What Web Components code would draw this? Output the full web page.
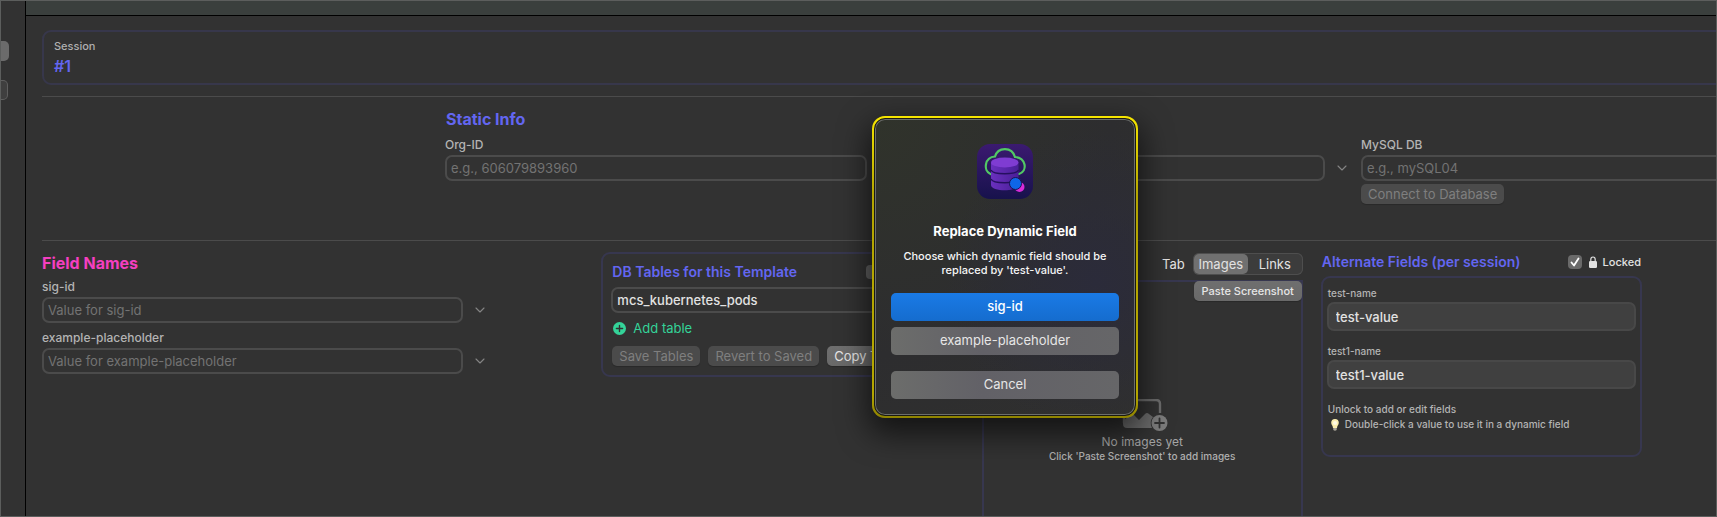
<!DOCTYPE html>
<html lang="en">
<head>
<meta charset="utf-8">
<title>Session #1</title>
<style>
  html, body { margin: 0; min-height: 100%; background: #323232; }
  body { font-family: Inter, "Liberation Sans", sans-serif; font-size: 13px; color: #e2e2e2; }
</style>
</head>
<body>
<app-window>
  <side-strip slot="side"></side-strip>
  <session-card name="#1"></session-card>
  <static-info></static-info>
  <work-area></work-area>
  <replace-dialog slot="dialog" heading="Replace Dynamic Field">Choose which dynamic field should be replaced by 'test-value'.</replace-dialog>
</app-window>

<script>
const define = (tag, html, setup) => {
  customElements.define(tag, class extends HTMLElement {
    constructor() {
      super();
      const t = document.createElement('template');
      t.innerHTML = '<style>*,:host{box-sizing:border-box}button,input{font:inherit;color:inherit;margin:0}' +
        'h2,h3,p{margin:0}</style>' + html;
      this.attachShadow({ mode: 'open' }).append(t.content.cloneNode(true));
      if (setup) setup(this, this.shadowRoot);
    }
  });
};

define('app-window', `
<style>
  :host { display: grid; grid-template-columns: auto minmax(0, 1fr); position: relative;
    height: 100vh; border: 1px solid #5c5e5d; overflow: hidden; background: #323232; }
  .main { display: flex; flex-direction: column; overflow: hidden; }
  .toolbar { flex: none; height: 15px; background: #3a3f3d; border-bottom: 1px solid #000; }
  .content { flex: 1; display: flex; flex-direction: column; padding: 14px 0 0 16px; min-height: 0; overflow: hidden; }
</style>
<slot name="side"></slot>
<div class="main"><div class="toolbar"></div><main class="content"><slot></slot></main></div>
<slot name="dialog"></slot>`);

define('side-strip', `
<style>
  :host { display: flex; flex-direction: column; gap: 19px; width: 25px; padding-top: 40px; border-right: 1px solid #000; }
  div { height: 20px; width: 8px; border-radius: 0 5px 5px 0; background: #6b6b6b; }
  .low { width: 7px; background: #3f3f3f; border: 1px solid #5f5f5f; border-left: 0; }
</style>
<div></div><div class="low"></div>`);

define('session-card', `
<style>
  :host { display: block; flex: none; height: 55px; margin-right: -16px; padding: 7px 10px; border: 2px solid #37374b; border-radius: 9px; }
  p { font-size: 11px; line-height: 14px; color: #b0b0b0; font-weight: 500; }
  h2 { margin-top: 2px; font-size: 16px; line-height: 22px; font-weight: 600; color: #6366f1; }
</style>
<p>Session</p><h2></h2>`, (el, root) => { root.querySelector('h2').textContent = el.getAttribute('name'); });

define('push-button', `
<style>
  :host { display: inline-flex; --pad: 7px; }
  button { flex: 1; height: 20px; padding: 0 var(--pad); border: 0; border-radius: 5px; background: linear-gradient(#6f6f6f, #696969);
    line-height: 20px; white-space: nowrap; color: #e6e6e6; box-shadow: 0 1px 1px #0003; }
  button:disabled { background: #4b4b4b; color: #7f7f7f; }
</style>
<button type="button"><slot></slot></button>`, (el, root) => {
  root.querySelector('button').disabled = el.hasAttribute('disabled');
});

/* Labelled text box; "menu" adds the history chevron after it */
define('text-field', `
<style>
  :host { display: block; }
  label { display: block; line-height: 16px; font-size: 12px; font-weight: 500; color: #b4b4b4; margin-bottom: 2px; }
  :host([bare]) label { display: none; }
  :host([bare]) input { font-weight: 500; }
  .row { display: flex; align-items: center; gap: 12px; }
  input { flex: 1; min-width: 0; height: 26px; padding: 0 4px; border: 2px solid #4b4b4b; border-radius: 7px; background: transparent; color: #e2e2e2; outline: 0; }
  input::placeholder { color: #737373; opacity: 1; }
  svg { flex: none; width: 10px; height: 6px; margin-right: 14px; }
  :host(:not([menu])) svg { display: none; }
  :host([filled]) label { font-size: 10px; line-height: 14px; padding-left: 1px; }
  :host([filled]) input { height: 29px; padding: 0 7px; background: #404040; border-color: #484848; font-weight: 500; }
</style>
<label for="box"></label>
<div class="row"><input id="box" type="text">
<svg viewBox="0 0 10 6" fill="none" stroke="#858585" stroke-width="1.1" stroke-linecap="round" stroke-linejoin="round"><path d="M1 1l4 4 4-4"/></svg></div>`, (el, root) => {
  const i = root.querySelector('input');
  root.querySelector('label').textContent = el.getAttribute('label') || '';
  i.placeholder = el.getAttribute('placeholder') || '';
  i.value = el.getAttribute('value') || '';
});

define('static-info', `
<style>
  :host { display: grid; flex: none; grid-template-columns: 403fr 458fr 458fr 355fr; height: 145px; margin-top: 11px; padding-top: 11px;
    border-top: 1px solid #4b4b4b; border-bottom: 1px solid #4b4b4b; align-content: start; }
  h2 { grid-column: 2 / -1; font-size: 16px; line-height: 22px; font-weight: 700; color: #6366f1; padding-left: 1px; }
  text-field { margin-top: 7px; }
  .first { grid-column: 2; }
  .last { margin-right: -30px; }
  push-button { grid-column: 4; justify-self: start; margin-top: 3px; }
</style>
<h2>Static Info</h2>
<text-field class="first" menu label="Org-ID" placeholder="e.g., 606079893960"></text-field>
<text-field menu label="Acct-ID"></text-field>
<text-field class="last" label="MySQL DB" placeholder="e.g., mySQL04"></text-field>
<push-button disabled>Connect to Database</push-button>`);

define('work-area', `
<style>
  :host { flex: 1; display: grid; grid-template-columns: 541fr 362fr 321fr 321fr; gap: 18px; padding: 11px 74px 0 0; min-height: 0; align-items: start; }
  image-tray { align-self: stretch; }
</style>
<field-names></field-names><db-tables></db-tables><image-tray></image-tray><alternate-fields></alternate-fields>`);

define('field-names', `
<style>
  :host { display: block; padding-right: 84px; }
  h2 { font-size: 16px; line-height: 22px; font-weight: 700; color: #f43fc0; margin-bottom: 5px; }
  .stack { display: flex; flex-direction: column; gap: 7px; }
</style>
<h2>Field Names</h2>
<div class="stack">
<text-field menu label="sig-id" placeholder="Value for sig-id"></text-field>
<text-field menu label="example-placeholder" placeholder="Value for example-placeholder"></text-field>
</div>`);

define('db-tables', `
<style>
  :host { display: block; height: 125px; padding: 8px; border: 2px solid #37374f; border-radius: 9px; }
  .head { display: flex; justify-content: space-between; align-items: center; height: 20px; padding-left: 1px; margin-bottom: 5px; }
  h3 { font-size: 14px; line-height: 20px; font-weight: 600; color: #6366f1; }
  .head button { width: 88px; height: 14px; border: 0; border-radius: 4px; background: #5f5f5f; }
  .add { display: flex; align-items: center; gap: 7px; height: 20px; margin: 5px 0 8px; padding: 0 2px; border: 0; background: none; color: #34d399; }
  .actions { display: flex; gap: 8px; padding-left: 1px; }
</style>
<div class="head"><h3>DB Tables for this Template</h3><button type="button" aria-label="Options"></button></div>
<text-field bare value="mcs_kubernetes_pods"></text-field>
<button class="add" type="button"><svg width="13" height="13" viewBox="0 0 13 13"><circle cx="6.5" cy="6.5" r="6.5" fill="#34d399"/><path d="M6.5 3.4v6.2M3.4 6.5h6.2" stroke="#323232" stroke-width="1.4" stroke-linecap="round"/></svg>Add table</button>
<div class="actions"><push-button disabled>Save Tables</push-button><push-button disabled>Revert to Saved</push-button><push-button>Copy Tables</push-button></div>`);

define('image-tray', `
<style>
  :host { display: flex; flex-direction: column; }
  .tabs { display: flex; align-items: center; justify-content: flex-end; gap: 8px; margin: 1px 0 5px; }
  .seg { display: flex; height: 22px; padding: 1px; border-radius: 6px; background: #3c3c3c; box-shadow: inset 0 0 0 1px #4e4e4e; }
  .seg button { width: 54px; padding: 0; border: 0; border-radius: 5px; background: none; line-height: 20px; }
  .seg button[aria-selected=true] { background: #707070; }
  .tray { flex: 1; display: flex; flex-direction: column; align-items: center; border: 2px solid #37374f; border-bottom: 0; }
  push-button { --pad: 8px; align-self: flex-end; font-size: 11px; font-weight: 500; margin: -1px -1px 98px 0; }
  .t { font-size: 12px; line-height: 16px; color: #a5a5a5; margin-top: 2px; }
  .s { font-size: 10px; line-height: 12px; color: #b0b0b0; font-weight: 500; }
</style>
<div class="tabs"><span>Tab</span><div class="seg" role="tablist"><button type="button" role="tab" aria-selected="true">Images</button><button type="button" role="tab" aria-selected="false">Links</button></div></div>
<div class="tray"><push-button>Paste Screenshot</push-button>
<svg width="52" height="33" viewBox="0 0 52 33"><path d="M8 24V5q0-4 4-4h28q4 0 4 4v9" fill="none" stroke="#6c6c6c" stroke-width="2.4"/><path d="M7 22l7-6q2-2 4 0l5 5 6-6q2-2 4 0l4 3a10 10 0 0 0-1 11H11q-4 0-4-4z" fill="#6c6c6c"/><circle cx="43.5" cy="24" r="8" fill="#7c7c7c"/><path d="M43.5 19.5v9M39 24h9" stroke="#323232" stroke-width="1.8" stroke-linecap="round"/></svg>
<p class="t">No images yet</p><p class="s">Click 'Paste Screenshot' to add images</p></div>`);

define('alternate-fields', `
<style>
  :host { display: block; }
  .head { display: flex; align-items: center; height: 20px; margin: 0 0 4px; padding: 0 1px; }
  h3 { flex: 1; font-size: 14px; line-height: 20px; font-weight: 600; color: #6366f1; white-space: nowrap; }
  input { appearance: none; width: 14px; height: 14px; border-radius: 4px; margin-right: 7px;
    background: #6a6a6a url('data:image/svg+xml,<svg xmlns="http://www.w3.org/2000/svg" viewBox="0 0 14 14"><path d="M3.5 7.5l2.5 3 4.5-7" fill="none" stroke="white" stroke-width="1.8" stroke-linecap="round" stroke-linejoin="round"/></svg>'); }
  label { display: flex; align-items: center; gap: 6px; font-size: 11px; font-weight: 500; }
  .card { display: flex; flex-direction: column; gap: 13px; height: 181px; padding: 8px 4px; border: 2px solid #37374f; border-radius: 9px; }
  .notes { font-size: 10px; line-height: 15px; color: #b4b4b4; padding-left: 1px; font-weight: 500; }
  .tip { display: flex; align-items: center; gap: 6px; padding-left: 3px; white-space: nowrap; }
</style>
<div class="head"><h3>Alternate Fields (per session)</h3><input id="lock" type="checkbox" checked>
<label for="lock"><svg width="8" height="12" viewBox="0 0 8 12"><rect y="5" width="8" height="7" rx="1.3" fill="#e2e2e2"/><path d="M1.8 6V3.4a2.2 2.4 0 0 1 4.4 0V6" fill="none" stroke="#e2e2e2" stroke-width="1.2"/></svg>Locked</label></div>
<div class="card">
<text-field filled label="test-name" value="test-value"></text-field>
<text-field filled label="test1-name" value="test1-value"></text-field>
<div class="notes"><p>Unlock to add or edit fields</p>
<p class="tip"><svg width="8" height="12" viewBox="0 0 8 12"><path d="M4 0a3.8 3.8 0 0 1 3.8 3.8C7.8 6 6 6.5 6 9H2C2 6.5.2 6 .2 3.8A3.8 3.8 0 0 1 4 0z" fill="#fbeeb0"/><circle cx="4" cy="4" r="2" fill="#fffbe6"/><path d="M2.3 9h3.4v2q-1.7 1.6-3.4 0z" fill="#a8a398"/></svg>Double-click a value to use it in a dynamic field</p></div></div>`);

/* Modal alert with its highlight ring */
define('replace-dialog', `
<style>
  :host { position: absolute; left: 871px; top: 115px; width: 266px; padding: 2px; border-radius: 13px;
    background: linear-gradient(#f7e600, #b5a600 26%, #b5a600 92%, #8f8300); box-shadow: 0 12px 30px 4px #0009; }
  section { display: flex; flex-direction: column; align-items: center; padding: 25px 15px 16px; border: 1px solid #1a1a12; border-radius: 11px;
    box-shadow: inset 0 0 0 1px #6d6f6d; background: radial-gradient(circle at 85% 55%, #2b2b3a, transparent 55%), radial-gradient(circle at 0 0, #30332b, #2d2d2f 60%, #30302e); }
  h2 { margin-top: 23px; font-size: 13px; line-height: 16px; font-weight: 700; color: #fff; }
  p { margin: 10px 0 16px; width: 210px; font-size: 11px; line-height: 14px; font-weight: 500; text-align: center; color: #f5f5f5; }
  button { width: 228px; height: 28px; padding: 0 0 2px; margin-bottom: 6px; border: 0; border-radius: 5px; background: linear-gradient(90deg, #6c6d6b, #626167 40%, #666668); color: #e6e6e6; }
  .primary { background: linear-gradient(#1a7ae6, #156cce); color: #fff; font-weight: 500; }
  .cancel { margin: 10px 0 0; }
</style>
<section role="dialog" aria-labelledby="t">
<svg width="56" height="56" viewBox="0 0 56 56">
  <defs><linearGradient id="bg" x1="0" y1="0" x2="0" y2="1"><stop offset="0" stop-color="#3b1a70"/><stop offset="1" stop-color="#17124c"/></linearGradient>
  <linearGradient id="cy" x1="0" y1="0" x2="1" y2="0"><stop offset="0" stop-color="#6a30be"/><stop offset="1" stop-color="#4a1f98"/></linearGradient></defs>
  <rect width="56" height="55" rx="13" fill="url(#bg)"/>
  <path d="M13.5 30C6 27 7.5 13 18 12.5C21 2.5 35 2.5 38 13C49 13.5 51 27 42 30" fill="none" stroke="#52c865" stroke-width="2.2" stroke-linecap="round"/>
  <path d="M14 19v22c0 7 27.5 7 27.5 0V19z" fill="url(#cy)"/>
  <path d="M14 26c2 5 25.5 5 27.5 0M14 35c2 5 25.5 5 27.5 0" fill="none" stroke="#25105f" stroke-width="1.4"/>
  <ellipse cx="27.75" cy="18.5" rx="13.75" ry="5" fill="#7f3cd2"/>
  <circle cx="42.5" cy="43" r="5" fill="#d82bd8"/><circle cx="38.5" cy="39.5" r="6" fill="#0f66e8" stroke="#1b1352"/>
</svg>
<h2 id="t"></h2><p><slot></slot></p>
<button class="primary" type="button">sig-id</button><button type="button">example-placeholder</button><button class="cancel" type="button">Cancel</button>
</section>`, (el, root) => { root.querySelector('h2').textContent = el.getAttribute('heading'); });
</script>
</body>
</html>
